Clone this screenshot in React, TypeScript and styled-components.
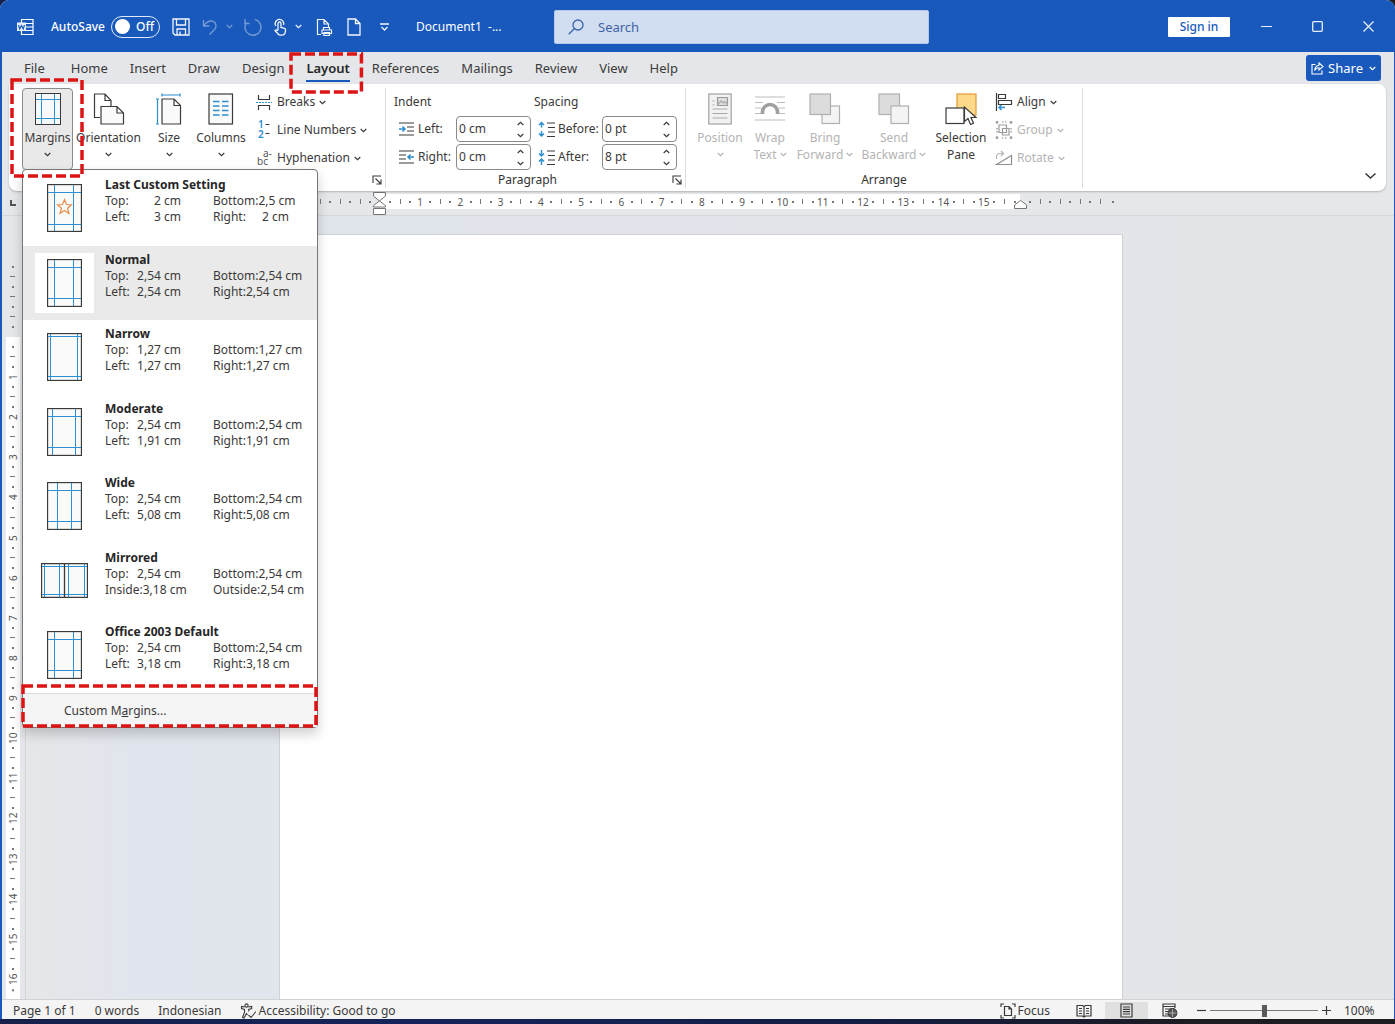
import React from "react";
import styled, { createGlobalStyle, css } from "styled-components";

const blue = "#1859bb";
const ink = "#3b3a39";
const accent = "#2b8fd0";
const line = "#8a8a8a";

const GlobalStyle = createGlobalStyle`
  *, *::before, *::after { box-sizing: border-box; }
  body { margin: 0; background: #2a2f3d; }
  body, button, input { font-family: "Noto Sans", "Open Sans", sans-serif; font-size: 12px; line-height: 16px; color: ${ink}; }
  button { border: 0; padding: 0; background: none; }
  svg { display: block; flex: none; }
`;

const Desktop = styled.div`
  display: flex;
  flex-direction: column;
  height: 100vh;
  padding-bottom: 5px;
  background: linear-gradient(90deg, #16204a 0%, #14235a 30%, #131d45 60%, #1c1c22 85%);
`;

const Window = styled.div`
  flex: 1;
  min-height: 0;
  display: flex;
  flex-direction: column;
  background: #e5e7ea;
  border: solid ${blue};
  border-width: 0 1px 0 2px;
  clip-path: inset(0 round 9px 9px 0 0);
`;

/* ---------- title bar ---------- */

const TitleBar = styled.header`
  display: flex;
  align-items: center;
  height: 52px;
  flex: none;
  background: ${blue};
  color: #fff;
  padding: 1px 8px 0 0;
`;

const QuickAccess = styled.div`
  display: flex;
  align-items: center;
  width: 552px;
  padding-left: 15px;
  flex: none;
`;

const AutoSave = styled.label`
  display: flex;
  align-items: center;
  gap: 6px;
  margin: 0 7px 0 16px;
  font-size: 12px;
  font-weight: 500;
`;

const Toggle = styled.span`
  display: flex;
  align-items: center;
  justify-content: space-between;
  width: 49px;
  height: 22px;
  border: 1px solid #dfe9fa;
  border-radius: 11px;
  padding: 0 5px 0 3px;
  position: relative;
  &::before { content: ""; width: 15px; height: 15px; border-radius: 50%; background: #fff; }
  input { position: absolute; inset: 0; opacity: 0; margin: 0; }
`;

const QuickButton = styled.button<{ $w: number; $dim?: boolean }>`
  display: flex;
  align-items: center;
  justify-content: center;
  width: ${(p) => p.$w}px;
  height: 28px;
  color: #fff;
  opacity: ${(p) => (p.$dim ? 0.4 : 0.95)};
`;

const DocTitle = styled.span`
  margin-left: 17px;
  white-space: pre;
`;

const SearchBox = styled.label`
  display: flex;
  align-items: center;
  gap: 14px;
  flex: 0 1 375px;
  height: 34px;
  padding: 0 13px;
  background: #d1ddf0;
  border: 1px solid #b5c8e8;
  border-radius: 2px;
  color: #3b62ad;
  input {
    flex: 1;
    min-width: 0;
    border: 0;
    padding: 0;
    background: none;
    outline: 0;
    font-size: 13px;
    &::placeholder { color: #3f62a6; opacity: 1; }
  }
`;

const WindowActions = styled.div`
  display: flex;
  align-items: center;
  margin-left: auto;
`;

const SignIn = styled.button`
  width: 62px;
  height: 20px;
  margin-right: 11px;
  background: #fff;
  color: ${blue};
  border-radius: 1px;
  font-weight: 500;
  line-height: 20px;
`;

const CaptionButton = styled.button`
  display: flex;
  align-items: center;
  justify-content: center;
  width: 51px;
  height: 30px;
  color: #e8f0fc;
  &:last-child { width: 36px; margin-left: 7px; }
`;

/* ---------- tabs ---------- */

const TabRow = styled.nav`
  display: flex;
  align-items: center;
  gap: 2px;
  height: 32px;
  flex: none;
  padding: 0 13px 0 12px;
  background: #e4e6e9;
`;

const Tab = styled.button<{ $active?: boolean }>`
  position: relative;
  height: 32px;
  padding: 0 10px;
  font-size: 13px;
  line-height: 20px;
  &:first-child { margin-right: 4px; }
  ${(p) => p.$active && css`font-weight: 600; color: #262626;`}
  & > span {
    display: block;
    padding: 2px 0;
    border: solid transparent;
    border-width: 2px 0;
    border-bottom-color: ${(p) => (p.$active ? blue : "transparent")};
  }
`;

const ShareButton = styled.button`
  display: flex;
  align-items: center;
  gap: 4px;
  height: 26px;
  margin: 0 0 0 auto;
  padding: 0 5px;
  border-radius: 3px;
  background: ${blue};
  color: #fff;
  font-size: 13px;
  svg:last-child { margin-left: 2px; }
`;

const CalloutFrame = styled.span<{ $top: number; $right: number; $bottom: number; $left: number }>`
  && {
    position: absolute;
    top: ${(p) => p.$top}px;
    right: ${(p) => p.$right}px;
    bottom: ${(p) => p.$bottom}px;
    left: ${(p) => p.$left}px;
    z-index: 20;
    padding: 0;
    border: 0;
    pointer-events: none;
  }
  svg { width: 100%; height: 100%; overflow: visible; }
`;

/* ---------- ribbon ---------- */

const Ribbon = styled.section`
  position: relative;
  display: flex;
  height: 107px;
  flex: none;
  margin: 0 8px 0 7px;
  padding: 4px 0 3px;
  background: #fff;
  border-radius: 0 8px 8px 8px;
  box-shadow: 0 1px 2px #0000003a;
  z-index: 3;
`;

const Group = styled.div<{ $w: number }>`
  display: flex;
  flex-direction: column;
  width: ${(p) => p.$w}px;
  border-right: 1px solid #dcdcdc;
`;

const GroupBody = styled.div<{ $pad: number }>`
  display: flex;
  height: 84px;
  padding-left: ${(p) => p.$pad}px;
`;

const GroupFooter = styled.div`
  display: flex;
  align-items: center;
  height: 16px;
  color: #333;
  span { flex: 1; text-align: center; }
  button { display: flex; justify-content: center; width: 16px; margin-left: auto; }
`;

const MenuAnchor = styled.div`
  position: relative;
  display: flex;
  height: 82px;
`;

const BigButton = styled.button<{ $w: number; $open?: boolean; $disabled?: boolean }>`
  display: flex;
  flex-direction: column;
  align-items: center;
  width: ${(p) => p.$w}px;
  height: 82px;
  padding-top: 4px;
  border: 1px solid transparent;
  border-radius: 4px;
  white-space: nowrap;
  line-height: 17px;
  ${(p) => p.$open && css`background: #e9e9e9; border-color: ${line};`}
  ${(p) => p.$disabled && css`color: #b4b4b4;`}
  & > svg:first-child { margin-bottom: 4px; }
`;

const BigLabel = styled.span`
  display: flex;
  align-items: center;
  justify-content: center;
  gap: 3px;
  height: 17px;
`;

const Stack = styled.div<{ $ml?: number }>`
  display: flex;
  flex-direction: column;
  align-items: flex-start;
  margin-left: ${(p) => p.$ml ?? 0}px;
`;

const SmallButton = styled.button<{ $disabled?: boolean }>`
  display: flex;
  align-items: center;
  gap: 4px;
  height: 28px;
  white-space: nowrap;
  ${(p) => p.$disabled && css`color: #b4b4b4;`}
`;

const FieldColumn = styled.div<{ $w: number }>`
  width: ${(p) => p.$w}px;
`;

const FieldHeading = styled.div`
  height: 27px;
  line-height: 27px;
`;

const Field = styled.div<{ $label: number }>`
  display: flex;
  align-items: center;
  height: 28px;
  padding-left: 4px;
  & > label {
    display: flex;
    align-items: center;
    gap: 3px;
    width: ${(p) => p.$label}px;
    white-space: nowrap;
  }
`;

const Spinner = styled.div`
  display: flex;
  width: 75px;
  height: 26px;
  border: 1px solid ${line};
  border-radius: 4px;
  background: #fff;
  input {
    width: 54px;
    border: 0;
    padding: 0 0 0 2px;
    background: none;
    outline: 0;
  }
`;

const SpinButtons = styled.div`
  display: flex;
  flex-direction: column;
  justify-content: space-around;
  align-items: center;
  width: 18px;
  button { height: 10px; display: flex; align-items: center; }
`;

const Collapse = styled.button`
  align-self: flex-end;
  margin: 0 9px 8px auto;
`;

/* ---------- margins menu ---------- */

const Menu = styled.div`
  position: absolute;
  top: 81px;
  left: 0;
  width: 296px;
  border: 1px solid #777;
  border-radius: 4px;
  background: #fff;
  box-shadow: 0 6px 12px #00000030;
  z-index: 10;
`;

const MenuList = styled.div`
  display: flex;
  flex-direction: column;
  height: 523px;
  padding-top: 1px;
`;

const MenuItem = styled.button<{ $active?: boolean }>`
  display: flex;
  flex: 1;
  gap: 11px;
  padding: 6px 0 0 12px;
  text-align: left;
  background: ${(p) => (p.$active ? "#eaeaea" : "transparent")};
`;

const Thumb = styled.span<{ $active?: boolean }>`
  display: flex;
  align-items: center;
  justify-content: center;
  width: 59px;
  height: 60px;
  margin-top: 1px;
  background: ${(p) => (p.$active ? "#fff" : "transparent")};
`;

const Details = styled.span`
  display: grid;
  grid-template-columns: 76px 76px;
  column-gap: 32px;
  align-content: start;
  align-self: start;
  strong { grid-column: 1 / -1; font-weight: 700; color: #262626; }
`;

const Measure = styled.span`
  display: flex;
  justify-content: space-between;
  white-space: nowrap;
`;

const MenuFooter = styled.button`
  position: relative;
  display: block;
  width: 100%;
  height: 34px;
  padding-left: 41px;
  text-align: left;
  background: #f5f5f5;
  border-top: 1px solid #dcdcdc;
`;

/* ---------- rulers and page ---------- */

const RulerRow = styled.div`
  position: relative;
  display: flex;
  justify-content: center;
  height: 25px;
  flex: none;
  padding: 3px 18px 0 24px;
  border-bottom: 1px solid #d6d8dc;
`;

const TabStop = styled.button`
  position: absolute;
  left: 8px;
  top: 9px;
  width: 6px;
  height: 6px;
  border: solid #555;
  border-width: 0 0 2px 2px;
`;

const Ruler = styled.div`
  display: flex;
  width: 840px;
  height: 15px;
`;

const RulerPart = styled.div<{ $size: number; $white?: boolean; $end?: boolean; $vertical?: boolean }>`
  display: flex;
  position: relative;
  flex: none;
  flex-direction: ${(p) => (p.$vertical ? "column" : "row")};
  justify-content: ${(p) => (p.$end ? "flex-end" : "flex-start")};
  ${(p) => (p.$vertical ? "height" : "width")}: ${(p) => p.$size}px;
  background: ${(p) => (p.$white ? "#fff" : "transparent")};
`;

const Ticks = styled.div<{ $size: number; $vertical?: boolean; $lead: number; $trail: number }>`
  display: flex;
  flex: none;
  flex-direction: ${(p) => (p.$vertical ? "column" : "row")};
  ${(p) => (p.$vertical ? "height" : "width")}: ${(p) => p.$size}px;
  margin: ${(p) => (p.$vertical ? `${p.$lead}px 0 ${p.$trail}px` : `0 ${p.$trail}px 0 ${p.$lead}px`)};
`;

const Tick = styled.span<{ $kind: "dot" | "bar" | "num"; $vertical?: boolean }>`
  flex: 1 1 0;
  min-width: 0;
  min-height: 0;
  display: flex;
  align-items: center;
  justify-content: center;
  font-size: 10px;
  line-height: 12px;
  color: #555;
  ${(p) => p.$vertical && css`writing-mode: vertical-rl; transform: rotate(180deg);`}
  &::before {
    content: "";
    display: ${(p) => (p.$kind === "num" ? "none" : "block")};
    background: #777;
    ${(p) =>
      p.$kind === "dot"
        ? "width: 2px; height: 2px;"
        : p.$vertical
        ? "width: 5px; height: 1px;"
        : "width: 1px; height: 5px;"}
  }
`;

const IndentMarker = styled.span<{ $side: "left" | "right" }>`
  position: absolute;
  top: ${(p) => (p.$side === "left" ? "-2px" : "6px")};
  ${(p) => p.$side}: -7px;
  z-index: 2;
`;

const Workspace = styled.main`
  flex: 1;
  min-height: 0;
  display: flex;
  overflow: hidden;
`;

const SideRuler = styled.div`
  width: 24px;
  flex: none;
  padding: 19px 5px 0 4px;
  background: #e4e6e9;
  border-right: 1px solid #d3d5d9;
  overflow: hidden;
`;

const Canvas = styled.div`
  flex: 1;
  display: flex;
  justify-content: center;
  padding: 18px 18px 0 0;
  background: linear-gradient(90deg, #e5e7e9 0%, #e1e5ed 8%, #e3e5ea 70%, #e4e5e8 100%);
`;

const Page = styled.article`
  width: 844px;
  background: #fff;
  border: 1px solid #d0d2d6;
  border-bottom: 0;
`;

/* ---------- status bar ---------- */

const StatusBar = styled.footer`
  display: flex;
  align-items: center;
  height: 20px;
  flex: none;
  padding: 2px 20px 0 11px;
  background: #f4f4f4;
  border-top: 1px solid #d2d2d2;
`;

const StatusItem = styled.button<{ $gap?: number }>`
  display: flex;
  align-items: center;
  gap: 2px;
  margin-right: ${(p) => p.$gap ?? 19}px;
  white-space: nowrap;
`;

const StatusRight = styled.div`
  display: flex;
  align-items: center;
  margin-left: auto;
`;

const ViewButton = styled.button<{ $active?: boolean }>`
  display: flex;
  align-items: center;
  justify-content: center;
  width: 43px;
  height: 18px;
  background: ${(p) => (p.$active ? "#e0e0e0" : "transparent")};
`;

const ZoomControls = styled.div`
  display: flex;
  align-items: center;
  margin-left: 6px;
`;

const ZoomSlider = styled.input`
  appearance: none;
  width: 108px;
  height: 14px;
  margin: 0 4px;
  background: linear-gradient(#777, #777) center / 100% 1px no-repeat;
  &::-webkit-slider-thumb {
    appearance: none;
    width: 5px;
    height: 12px;
    background: #5a5a5a;
  }
`;

const ZoomValue = styled.span`
  width: 30px;
  margin-left: 13px;
`;

/* ---------- icons ---------- */

type IconProps = { w: number; h: number; children: React.ReactNode; sw?: number };
const Icon = ({ w, h, children, sw = 1 }: IconProps) => (
  <svg width={w} height={h} viewBox={`0 0 ${w} ${h}`} fill="none" stroke="currentColor" strokeWidth={sw} aria-hidden="true">
    {children}
  </svg>
);

const Chevron = ({ sw = 1.2 }: { sw?: number }) => (
  <Icon w={7} h={5} sw={sw}><path d="M.7 1 3.5 3.6 6.3 1" /></Icon>
);

const WordIcon = () => (
  <Icon w={18} h={18} sw={1.2}>
    <path d="M4.500 5V1.500H16v15H4.500V13M9 5.500h7M9 9h7M9 12.500h7" />
    <rect x="0" y="4.500" width="9" height="8.500" fill="#e7effb" stroke="none" />
    <path d="m1.500 7 1.200 4L4.500 7.500 6.200 11 7.500 7" stroke={blue} />
  </Icon>
);
const SaveIcon = () => (
  <Icon w={18} h={18} sw={1.3}>
    <path d="M1 1h16v16H3l-2-2ZM4.500 1v6h9V1M5 17v-6h8.500v6M8 13.500V17" />
  </Icon>
);
const UndoIcon = () => (
  <Icon w={18} h={18} sw={1.4}>
    <path d="M2.500 2v6h6M2.700 7.800C5 4.500 8 2.200 11.500 3.200c4 1.300 4.500 5.500 2 8.200L8.500 16.500" />
  </Icon>
);
const RedoIcon = () => (
  <Icon w={20} h={20} sw={1.4}>
    <path d="M12 2.500A8 8 0 1 1 3.500 5.500M2 2v4.500h4.500" />
  </Icon>
);
const TouchIcon = () => (
  <Icon w={14} h={18} sw={1.3}>
    <path d="M5 12V5.500a1.500 1.500 0 0 1 3 0V9.500l3.500.8c1 .3 1.300 1 1.100 2L12 15c-.4 1.500-1.300 2.200-2.800 2.200H7.500c-1 0-1.800-.4-2.400-1.200L2 12.500c1-1 2-.8 3 .3M2.800 8A4.300 4.300 0 1 1 10.500 7" />
  </Icon>
);
const PrintIcon = () => (
  <Icon w={17} h={18} sw={1.2}>
    <path d="M5 16.500H1.500v-15H8l4.500 4.500v3M8 1.500V6h4.500M7.500 12V9.500h6V12M6 15.500V12h9.500v3.500ZM8 14.500h5.500v3H8Z" />
  </Icon>
);
const NewIcon = () => (
  <Icon w={14} h={18} sw={1.3}><path d="M1 1h7.500L13 5.500V17H1ZM8.500 1v4.500H13" /></Icon>
);
const ShareIcon = () => (
  <Icon w={13} h={13} sw={1.1}>
    <path d="M4.500 2.500H1v9.500h10V8.500M8 1l4 3.500L8 8V5.800C6 5.800 4.600 6.700 3.600 8.500 3.900 5.500 5.500 3.500 8 3.200Z" />
  </Icon>
);

const Paper = "#fafafa";

const MarginsIcon = () => (
  <Icon w={26} h={32}>
    <rect x=".5" y=".5" width="25" height="31" fill="#f7fafc" />
    <path d="M6.500 1v30M19.500 1v30M1 6.500h24M1 25.500h24" stroke={accent} />
  </Icon>
);
const OrientationIcon = () => (
  <Icon w={32} h={32} sw={1.2}>
    <path d="M7 24.500H1.500V1H12l6 6.500v6M12 1v6.500h6" />
    <path d="M8 13.500h16l6.500 6.500v11H8ZM24 13.500V20h6.500" fill={Paper} />
  </Icon>
);
const SizeIcon = () => (
  <Icon w={26} h={32} sw={1.2}>
    <path d="M6 6h12l6.500 6.500V31H6ZM18 6v6.500h6.500" fill={Paper} />
    <path d="M1.500 6v25M0 6h3M0 31h3M6 2h18M6 .5v3M24 .5v3" stroke={accent} />
  </Icon>
);
const ColumnsIcon = () => (
  <Icon w={26} h={32} sw={1.2}>
    <rect x="1" y="1" width="23.500" height="30" fill={Paper} />
    <path d="M5 8.500h6.500M5 13h6.500M5 17.500h6.500M5 22h6.500M14 8.500h6.500M14 13h6.500M14 17.500h6.500M14 22h6.500" stroke={accent} strokeWidth="1.300" />
  </Icon>
);
const BreaksIcon = () => (
  <Icon w={17} h={17} sw={1.2}>
    <path d="M2.500 1v4.500h11V1M2.500 16v-4.500h11V16" />
    <path d="M0 8.500h16" stroke={accent} strokeDasharray="2 1" />
  </Icon>
);
const SmallGlyph = styled.text`
  font-family: "Noto Sans", sans-serif;
  font-size: 10px;
  stroke: none;
`;
const LineNumbersIcon = () => (
  <Icon w={17} h={26}>
    <SmallGlyph fill={accent} fontWeight="600">
      <tspan x="2" y="11">1</tspan>
      <tspan x="2" y="21">2</tspan>
    </SmallGlyph>
    <path d="M9.500 7.500h4M9.500 16.500h4" />
  </Icon>
);
const HyphenIcon = () => (
  <Icon w={17} h={26}>
    <SmallGlyph fill="#555">
      <tspan x="1" y="20">bc</tspan>
      <tspan x="7" y="12">a-</tspan>
    </SmallGlyph>
  </Icon>
);

const LeftIndentIcon = () => (
  <Icon w={17} h={16} sw={1.2}>
    <path d="M1 2h15M9 6h7M9 10h7M1 14h15" />
    <path d="M1 8h6M4.500 5.500 7 8l-2.500 2.500" stroke={accent} strokeWidth="1.500" />
  </Icon>
);
const RightIndentIcon = () => (
  <Icon w={17} h={16} sw={1.2}>
    <path d="M1 2h15M1 6h7M1 10h7M1 14h15" />
    <path d="M10 8h6M12.500 5.500 10 8l2.500 2.500" stroke={accent} strokeWidth="1.500" />
  </Icon>
);
const BeforeIcon = () => (
  <Icon w={17} h={17} sw={1.2}>
    <path d="M9 2h8M10 6.500h7M10 11h7M9 15.500h8" />
    <path d="M3.500 1.500v5M1 4l2.500-2.500L6 4M3.500 10v5M1 12.500 3.500 15 6 12.500" stroke={accent} strokeWidth="1.500" />
  </Icon>
);
const AfterIcon = () => (
  <Icon w={17} h={17} sw={1.2}>
    <path d="M9 2h8M10 6.500h7M10 11h7M9 15.500h8" />
    <path d="M3.500 1v6M1 4.500 3.500 7 6 4.500M3.500 16v-6M1 12.500 3.500 10 6 12.500" stroke={accent} strokeWidth="1.500" />
  </Icon>
);
const LauncherIcon = () => (
  <Icon w={10} h={10} sw={1.1}><path d="M1 8V1h8M3.500 3.500 8.500 8.500M9 4.500V9H4.500" /></Icon>
);

const PositionIcon = () => (
  <Icon w={24} h={32} sw={1.2}>
    <rect x=".8" y="1" width="22.400" height="30" fill="#f2f2f2" stroke="#a3a3a3" />
    <path d="M9.500 4.500h10v8h-10Z" fill="#ddd" stroke="#9a9a9a" />
    <path d="m10 11 3-3 2.500 2 1.500-1.500 2.500 2.500M4.500 8h2M4.500 12h2M4.500 16h15M4.500 20.500h15M4.500 25h15" stroke="#a9a9a9" />
  </Icon>
);
const WrapIcon = () => (
  <Icon w={32} h={32} sw={1.2}>
    <path d="M1 4h30M1 9.500h8M23 9.500h8M1 15h6M25 15h6M1 20.500h6M25 20.500h6M1 27h30" stroke="#bdbdbd" />
    <path d="M8.500 21v-2a7.500 7.500 0 0 1 15 0v2" stroke="#a0a0a0" strokeWidth="3.600" />
  </Icon>
);
const BringIcon = () => (
  <Icon w={32} h={32} sw={1.2}>
    <rect x="13" y="13" width="17.500" height="17.500" fill="#f4f4f4" stroke="#b0b0b0" />
    <rect x="1" y="1" width="20.500" height="20.500" fill="#dcdcdc" stroke="#b0b0b0" />
  </Icon>
);
const SendIcon = () => (
  <Icon w={32} h={32} sw={1.2}>
    <rect x="1" y="1" width="20.500" height="20.500" fill="#dcdcdc" stroke="#b0b0b0" />
    <rect x="13" y="13" width="17.500" height="17.500" fill="#f4f4f4" stroke="#b0b0b0" />
  </Icon>
);
const SelectionIcon = () => (
  <Icon w={32} h={32} sw={1.2}>
    <rect x="12" y="1" width="19" height="21" fill="#ffd98a" stroke="#e39a35" />
    <rect x="1" y="15" width="18" height="15.500" fill="#fff" />
    <path d="M19.500 14v14.500l3.500-3 2.500 6 3-1.300-2.500-5.700h5Z" fill="#fff" />
  </Icon>
);
const AlignIcon = () => (
  <Icon w={18} h={18} sw={1.2}>
    <path d="M1.500 0v18M3.500 1.500h7v4h-7ZM3.500 7.500h13v4h-13Z" />
    <path d="M10 14.500H4M6.500 12 4 14.500 6.500 17" stroke={accent} strokeWidth="1.500" />
  </Icon>
);
const GroupIcon = () => (
  <Icon w={18} h={18} sw={1.2}>
    <path d="M4 4h7.500v7.500H4ZM7.500 7.500h6.500v6.500H7.500Z" stroke="#9c9c9c" />
    <path d="M.5 1h3M14.500 1h3M.5 17h3M14.500 17h3M2 0v3M16 0v3M2 15v3M16 15v3M7 1h1.500M10 1h1.500M7 17h1.500M10 17h1.500M2 7v1.500M2 10v1.500M16 7v1.500M16 10v1.500" stroke="#8d8d8d" />
  </Icon>
);
const RotateIcon = () => (
  <Icon w={18} h={16} sw={1.2}>
    <path d="M16.500 5.500v9H1.500Z" stroke="#8d8d8d" />
    <path d="M1.500 9V7c0-2.500 1.500-3.500 3.500-3.500h3M6 1l2.500 2.500L6 6" />
  </Icon>
);
const CollapseIcon = () => (
  <Icon w={13} h={8} sw={1.6}><path d="m1.500 1.500 5 4.500 5-4.500" /></Icon>
);

const AccessIcon = () => (
  <Icon w={16} h={16} sw={1.1}>
    <circle cx="6.500" cy="2.500" r="1.600" />
    <path d="M4.800 4 1.500 3.500v2l3 1v3l-2 5 1.500.5 2.500-4.500 1 1.500M8.200 4l3.500-.5v2l-3 1v2M8.500 12l2.500 2.500 5-6" />
  </Icon>
);
const FocusIcon = () => (
  <Icon w={16} h={16} sw={1.2}>
    <path d="M1 4V1h3M12 1h3v3M15 12v3h-3M4 15H1v-3M4.500 3.500h4.500l2.500 2.500v6.500h-7ZM9 3.500V6h2.500" />
  </Icon>
);
const ReadIcon = () => (
  <Icon w={16} h={14} sw={1.2}>
    <path d="M1 1.500h5.500L8 2.500l1.500-1H15v10.500H9.500L8 13l-1.500-1H1ZM8 2.500V13M3 4.500h3M3 7h3M3 9.500h3M10 4.500h3M10 7h3M10 9.500h3" />
  </Icon>
);
const PrintLayoutIcon = () => (
  <Icon w={13} h={15} sw={1.2}>
    <path d="M1 1h11v13H1ZM3 4h7M3 6.300h7M3 8.600h7M3 11h7" />
  </Icon>
);
const WebIcon = () => (
  <Icon w={16} h={15} sw={1.2}>
    <path d="M7 13H1V1h12v4M1 3.500h12M3 6h7M3 8.500h4M3 11h3" />
    <circle cx="10.500" cy="10" r="4.300" fill="#555" />
    <path d="M6.500 10h8M10.500 6v8" stroke="#ccc" strokeWidth=".7" />
  </Icon>
);

const PageThumb = ({ l, r, t, b, star }: { l: number; r: number; t: number; b: number; star?: boolean }) => (
  <Icon w={35} h={48}>
    <rect x=".5" y=".5" width="34" height="47" fill={Paper} strokeWidth="1.300" />
    <path d={`M${l + 0.5} 1v46M${r + 0.5} 1v46M1 ${t + 0.5}h33M1 ${b + 0.5}h33`} stroke={accent} />
    {star && <path d="m17.500 15.500 2 5 5 .3-4 3.400 1.400 5.200-4.400-3-4.400 3 1.400-5.200-4-3.400 5-.3Z" stroke="#e98a45" strokeWidth="1.200" />}
  </Icon>
);
const MirrorThumb = () => (
  <Icon w={47} h={35}>
    <path d="M.5.500h46v34H.500Z" fill={Paper} strokeWidth="1.300" />
    <path d="M3.500 1v33M18.500 1v33M27.500 1v33M43.500 1v33M1 3.500h45M1 31.500h45" stroke={accent} />
    <path d="M23.500 0v35" strokeWidth="1.300" />
  </Icon>
);

const Callout = (p: { top: number; right: number; bottom: number; left: number }) => (
  <CalloutFrame $top={p.top} $right={p.right} $bottom={p.bottom} $left={p.left} aria-hidden="true">
    <svg>
      <rect width="100%" height="100%" fill="none" stroke="#dd1414" strokeWidth="3.500" strokeDasharray="10 4" />
    </svg>
  </CalloutFrame>
);

/* ---------- data ---------- */

const tabs = ["File", "Home", "Insert", "Draw", "Design", "Layout", "References", "Mailings", "Review", "View", "Help"];

type Preset = { name: string; rows: [string, string, string, string][]; thumb: React.ReactNode };

const preset = (name: string, top: string, bottom: string, left: string, right: string, thumb: React.ReactNode, inner = "Left:", outer = "Right:"): Preset => ({
  name,
  rows: [["Top:", top, "Bottom:", bottom], [inner, left, outer, right]],
  thumb,
});

const presets: Preset[] = [
  preset("Last Custom Setting", "2 cm", "2,5 cm", "3 cm", "2 cm", <PageThumb l={7} r={26} t={8} b={40} star />),
  preset("Normal", "2,54 cm", "2,54 cm", "2,54 cm", "2,54 cm", <PageThumb l={7} r={26} t={8} b={39} />),
  preset("Narrow", "1,27 cm", "1,27 cm", "1,27 cm", "1,27 cm", <PageThumb l={3} r={30} t={3} b={43} />),
  preset("Moderate", "2,54 cm", "2,54 cm", "1,91 cm", "1,91 cm", <PageThumb l={5} r={28} t={8} b={39} />),
  preset("Wide", "2,54 cm", "2,54 cm", "5,08 cm", "5,08 cm", <PageThumb l={10} r={24} t={8} b={39} />),
  preset("Mirrored", "2,54 cm", "2,54 cm", "3,18 cm", "2,54 cm", <MirrorThumb />, "Inside:", "Outside:"),
  preset("Office 2003 Default", "2,54 cm", "2,54 cm", "3,18 cm", "3,18 cm", <PageThumb l={7} r={26} t={8} b={39} />),
];

/* ---------- pieces ---------- */

type MarksProps = { units: number; size: number; numbers?: boolean; vertical?: boolean; beforeZero?: boolean };

const Marks = ({ units, size, numbers, vertical, beforeZero }: MarksProps) => (
  <Ticks $size={size} $vertical={vertical} $lead={beforeZero ? 0 : 5} $trail={beforeZero ? -5 : 0}>
    {Array.from({ length: units * 4 }, (_, i) => {
      const quarter = (i + 1) % 4;
      const zero = beforeZero && i === units * 4 - 1;
      if (quarter === 0 && (numbers || zero)) {
        return <Tick key={i} $kind="num" $vertical={vertical}>{zero ? "" : (i + 1) / 4}</Tick>;
      }
      return <Tick key={i} $kind={quarter % 2 ? "dot" : "bar"} $vertical={vertical} />;
    })}
  </Ticks>
);

const Big = ({ icon, lines, w, open, disabled, arrow = "below" }: { icon: React.ReactNode; lines: string[]; w: number; open?: boolean; disabled?: boolean; arrow?: "below" | "inline" | "none" }) => (
  <BigButton $w={w} $open={open} $disabled={disabled} disabled={disabled}>
    {icon}
    {lines.map((text, i) => (
      <BigLabel key={text}>
        {text}
        {arrow === "inline" && i === lines.length - 1 && <Chevron />}
      </BigLabel>
    ))}
    {arrow === "below" && <BigLabel><Chevron /></BigLabel>}
  </BigButton>
);

const Small = ({ icon, text, disabled }: { icon: React.ReactNode; text: string; disabled?: boolean }) => (
  <SmallButton $disabled={disabled} disabled={disabled}>
    {icon}
    <span>{text}</span>
    <Chevron />
  </SmallButton>
);

const SpinField = ({ id, label, value, icon, w }: { id: string; label: string; value: string; icon: React.ReactNode; w: number }) => (
  <Field $label={w}>
    <label htmlFor={id}>{icon}{label}</label>
    <Spinner>
      <input id={id} defaultValue={value} />
      <SpinButtons>
        <button aria-label={`Increase ${label}`}><Icon w={7} h={5} sw={1.2}><path d="M.7 4 3.500 1.400 6.300 4" /></Icon></button>
        <button aria-label={`Decrease ${label}`}><Chevron /></button>
      </SpinButtons>
    </Spinner>
  </Field>
);

export default function App() {
  return (
    <Desktop>
      <GlobalStyle />
      <Window>
        <TitleBar>
          <QuickAccess>
            <WordIcon />
            <AutoSave>
              AutoSave
              <Toggle><input type="checkbox" aria-label="AutoSave" />Off</Toggle>
            </AutoSave>
            <QuickButton $w={28} aria-label="Save"><SaveIcon /></QuickButton>
            <QuickButton $w={30} $dim aria-label="Undo"><UndoIcon /></QuickButton>
            <QuickButton $w={8} $dim aria-label="Undo options"><Chevron /></QuickButton>
            <QuickButton $w={40} $dim aria-label="Redo"><RedoIcon /></QuickButton>
            <QuickButton $w={14} aria-label="Touch mode"><TouchIcon /></QuickButton>
            <QuickButton $w={22} aria-label="Touch options"><Chevron /></QuickButton>
            <QuickButton $w={30} aria-label="Print preview"><PrintIcon /></QuickButton>
            <QuickButton $w={30} aria-label="New"><NewIcon /></QuickButton>
            <QuickButton $w={30} aria-label="Customize toolbar">
              <Icon w={9} h={8} sw={1.3}><path d="M0 1h9M1.500 4l3 3 3-3" /></Icon>
            </QuickButton>
            <DocTitle>Document1  -...</DocTitle>
          </QuickAccess>
          <SearchBox>
            <Icon w={16} h={16} sw={1.3}><circle cx="10" cy="6" r="5" /><path d="M6.500 9.500.7 15.300" /></Icon>
            <input placeholder="Search" aria-label="Search" />
          </SearchBox>
          <WindowActions>
            <SignIn>Sign in</SignIn>
            <CaptionButton aria-label="Minimize"><Icon w={11} h={11}><path d="M0 5.500h11" /></Icon></CaptionButton>
            <CaptionButton aria-label="Maximize"><Icon w={11} h={11} sw={1.3}><rect x=".7" y=".7" width="9.600" height="9.600" rx="1" /></Icon></CaptionButton>
            <CaptionButton aria-label="Close"><Icon w={11} h={11} sw={1.3}><path d="m.5.500 10 10M10.500.500l-10 10" /></Icon></CaptionButton>
          </WindowActions>
        </TitleBar>

        <TabRow>
          {tabs.map((t) => (
            <Tab key={t} $active={t === "Layout"}>
              <span>{t}</span>
              {t === "Layout" && <Callout top={2} right={-2} bottom={-8} left={-5} />}
            </Tab>
          ))}
          <ShareButton><ShareIcon />Share<Chevron /></ShareButton>
        </TabRow>

        <Ribbon>
          <Group $w={377}>
            <GroupBody $pad={13}>
              <MenuAnchor>
                <Big icon={<MarginsIcon />} lines={["Margins"]} w={51} open />
                <Callout top={-8} right={-9} bottom={-6} left={-10} />
                <Menu>
                  <MenuList>
                    {presets.map((p) => {
                      const active = p.name === "Normal";
                      return (
                        <MenuItem key={p.name} $active={active}>
                          <Thumb $active={active}>{p.thumb}</Thumb>
                          <Details>
                            <strong>{p.name}</strong>
                            {p.rows.map(([a, b, c, d]) => (
                              <React.Fragment key={a}>
                                <Measure><span>{a}</span><span>{b}</span></Measure>
                                <Measure><span>{c}</span><span>{d}</span></Measure>
                              </React.Fragment>
                            ))}
                          </Details>
                        </MenuItem>
                      );
                    })}
                  </MenuList>
                  <MenuFooter>
                    Custom M<u>a</u>rgins...
                    <Callout top={-8} right={1} bottom={1} left={0} />
                  </MenuFooter>
                </Menu>
              </MenuAnchor>
              <Big icon={<OrientationIcon />} lines={["Orientation"]} w={71} />
              <Big icon={<SizeIcon />} lines={["Size"]} w={50} />
              <Big icon={<ColumnsIcon />} lines={["Columns"]} w={54} />
              <Stack $ml={8}>
                <Small icon={<BreaksIcon />} text="Breaks" />
                <Small icon={<LineNumbersIcon />} text="Line Numbers" />
                <Small icon={<HyphenIcon />} text="Hyphenation" />
              </Stack>
            </GroupBody>
            <GroupFooter><button aria-label="Page setup settings"><LauncherIcon /></button></GroupFooter>
          </Group>

          <Group $w={300}>
            <GroupBody $pad={8}>
              <FieldColumn $w={140}>
                <FieldHeading>Indent</FieldHeading>
                <SpinField id="indent-left" label="Left:" value="0 cm" icon={<LeftIndentIcon />} w={58} />
                <SpinField id="indent-right" label="Right:" value="0 cm" icon={<RightIndentIcon />} w={58} />
              </FieldColumn>
              <FieldColumn $w={148}>
                <FieldHeading>Spacing</FieldHeading>
                <SpinField id="space-before" label="Before:" value="0 pt" icon={<BeforeIcon />} w={64} />
                <SpinField id="space-after" label="After:" value="8 pt" icon={<AfterIcon />} w={64} />
              </FieldColumn>
            </GroupBody>
            <GroupFooter><span>Paragraph</span><button aria-label="Paragraph settings"><LauncherIcon /></button></GroupFooter>
          </Group>

          <Group $w={397}>
            <GroupBody $pad={7}>
              <Big icon={<PositionIcon />} lines={["Position"]} w={54} disabled />
              <Big icon={<WrapIcon />} lines={["Wrap", "Text"]} w={46} arrow="inline" disabled />
              <Big icon={<BringIcon />} lines={["Bring", "Forward"]} w={64} arrow="inline" disabled />
              <Big icon={<SendIcon />} lines={["Send", "Backward"]} w={74} arrow="inline" disabled />
              <Big icon={<SelectionIcon />} lines={["Selection", "Pane"]} w={60} arrow="none" />
              <Stack $ml={4}>
                <Small icon={<AlignIcon />} text="Align" />
                <Small icon={<GroupIcon />} text="Group" disabled />
                <Small icon={<RotateIcon />} text="Rotate" disabled />
              </Stack>
            </GroupBody>
            <GroupFooter><span>Arrange</span></GroupFooter>
          </Group>
          <Collapse aria-label="Collapse ribbon"><CollapseIcon /></Collapse>
        </Ribbon>

        <RulerRow>
          <TabStop aria-label="Tab stop" />
          <Ruler>
            <RulerPart $size={99} $end>
              <Marks units={2} size={80} beforeZero />
            </RulerPart>
            <RulerPart $size={640} $white>
              <IndentMarker $side="left">
                <Icon w={13} h={23}>
                  <path d="M.5.500h12v3.500L6.500 9 .5 4ZM6.500 9l6 4.500v1.500H.500v-1.500ZM.5 16.500h12v6H.500Z" fill="#fff" stroke="#777" />
                </Icon>
              </IndentMarker>
              <Marks units={15} size={604} numbers />
              <Tick $kind="dot" />
              <Tick $kind="bar" />
              <Tick $kind="dot" />
              <IndentMarker $side="right">
                <Icon w={13} h={9}><path d="M.5 8.500V5L6.500.500l6 4.500v3.500Z" fill="#fff" stroke="#777" /></Icon>
              </IndentMarker>
            </RulerPart>
            <RulerPart $size={100}>
              <Marks units={2} size={80} />
              <Tick $kind="dot" />
            </RulerPart>
          </Ruler>
        </RulerRow>

        <Workspace>
          <SideRuler>
            <RulerPart $size={102} $vertical $end>
              <Marks units={2} size={80} vertical beforeZero />
            </RulerPart>
            <RulerPart $size={684} $vertical $white>
              <Marks units={16} size={642} numbers vertical />
              <Tick $kind="dot" $vertical />
              <Tick $kind="bar" $vertical />
              <Tick $kind="dot" $vertical />
            </RulerPart>
          </SideRuler>
          <Canvas><Page aria-label="Document page" /></Canvas>
        </Workspace>

        <StatusBar>
          <StatusItem>Page 1 of 1</StatusItem>
          <StatusItem>0 words</StatusItem>
          <StatusItem>Indonesian</StatusItem>
          <StatusItem><AccessIcon />Accessibility: Good to go</StatusItem>
          <StatusRight>
            <StatusItem $gap={12}><FocusIcon />Focus</StatusItem>
            <ViewButton aria-label="Read mode"><ReadIcon /></ViewButton>
            <ViewButton $active aria-label="Print layout"><PrintLayoutIcon /></ViewButton>
            <ViewButton aria-label="Web layout"><WebIcon /></ViewButton>
            <ZoomControls>
              <button aria-label="Zoom out"><Icon w={9} h={9} sw={1.2}><path d="M0 4.500h9" /></Icon></button>
              <ZoomSlider type="range" min={0} max={100} defaultValue={50} aria-label="Zoom" />
              <button aria-label="Zoom in"><Icon w={9} h={9} sw={1.2}><path d="M0 4.500h9M4.500 0v9" /></Icon></button>
              <ZoomValue>100%</ZoomValue>
            </ZoomControls>
          </StatusRight>
        </StatusBar>
      </Window>
    </Desktop>
  );
}
